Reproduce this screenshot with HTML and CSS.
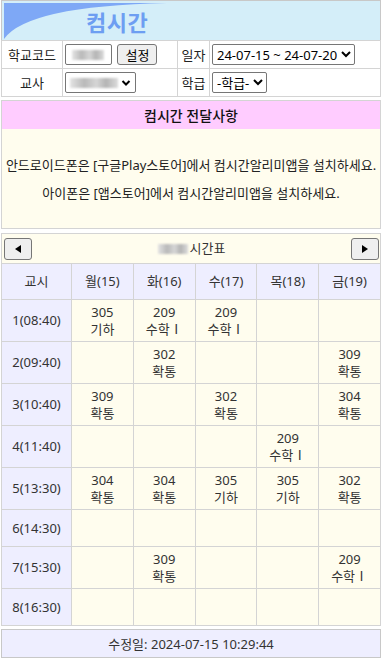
FILE: index.html
```html
<!DOCTYPE html>
<html lang="ko">
<head>
<meta charset="utf-8">
<title>컴시간</title>
<link rel="stylesheet" href="styles.css">
</head>
<body>
<div class="page">
  <div class="header">
    <svg class="swoosh" width="170" height="40" viewBox="0 0 170 40" aria-hidden="true">
      <path d="M2,2 L165,2 Q25,5 2,38 Z" fill="#7ea8f6"/>
    </svg>
    <h1 class="title">컴시간</h1>
  </div>

  <table class="form">
    <tr>
      <th class="lbl">학교코드</th>
      <td class="inp">
        <span class="fake-input"><span class="blur b1"></span></span>
        <button class="btn set">설정</button>
      </td>
      <th class="lbl2">일자</th>
      <td class="val">
        <select class="sel"><option>24-07-15 ~ 24-07-20</option></select>
      </td>
    </tr>
    <tr>
      <th class="lbl">교사</th>
      <td class="inp">
        <span class="fake-select"><span class="blur b2"></span><svg class="chev" width="10" height="8" viewBox="0 0 10 8"><path d="M1.5,2 L5,5.5 L8.5,2" fill="none" stroke="#000" stroke-width="2"/></svg></span>
      </td>
      <th class="lbl2">학급</th>
      <td class="val">
        <select class="sel"><option>-학급-</option></select>
      </td>
    </tr>
  </table>

  <div class="notice">
    <div class="notice-title">컴시간 전달사항</div>
    <div class="notice-body">
      <p>안드로이드폰은 [구글Play스토어]에서 컴시간알리미앱을 설치하세요.</p>
      <p>아이폰은 [앱스토어]에서 컴시간알리미앱을 설치하세요.</p>
    </div>
  </div>

  <table class="tt">
    <colgroup>
      <col class="c0"><col><col><col><col><col>
    </colgroup>
    <tr class="cap">
      <td colspan="6">
        <div class="cap-row">
          <button class="btn nav"><svg width="10" height="10" viewBox="0 0 10 10"><path d="M8,1 L2,5 L8,9 Z" fill="#000"/></svg></button>
          <span class="cap-title"><span class="blur b3"></span>시간표</span>
          <button class="btn nav"><svg width="10" height="10" viewBox="0 0 10 10"><path d="M2,1 L8,5 L2,9 Z" fill="#000"/></svg></button>
        </div>
      </td>
    </tr>
    <tr class="head">
      <th>교시</th><th>월(15)</th><th>화(16)</th><th>수(17)</th><th>목(18)</th><th>금(19)</th>
    </tr>
    <tr>
      <th>1(08:40)</th><td>305<br>기하</td><td>209<br>수학Ⅰ</td><td>209<br>수학Ⅰ</td><td></td><td></td>
    </tr>
    <tr>
      <th>2(09:40)</th><td></td><td>302<br>확통</td><td></td><td></td><td>309<br>확통</td>
    </tr>
    <tr>
      <th>3(10:40)</th><td>309<br>확통</td><td></td><td>302<br>확통</td><td></td><td>304<br>확통</td>
    </tr>
    <tr>
      <th>4(11:40)</th><td></td><td></td><td></td><td>209<br>수학Ⅰ</td><td></td>
    </tr>
    <tr>
      <th>5(13:30)</th><td>304<br>확통</td><td>304<br>확통</td><td>305<br>기하</td><td>305<br>기하</td><td>302<br>확통</td>
    </tr>
    <tr class="empty">
      <th>6(14:30)</th><td></td><td></td><td></td><td></td><td></td>
    </tr>
    <tr>
      <th>7(15:30)</th><td></td><td>309<br>확통</td><td></td><td></td><td>209<br>수학Ⅰ</td>
    </tr>
    <tr class="empty">
      <th>8(16:30)</th><td></td><td></td><td></td><td></td><td></td>
    </tr>
  </table>

  <div class="footer">수정일: 2024-07-15 10:29:44</div>
</div>
</body>
</html>
```

FILE: styles.css
```css
* { box-sizing: border-box; }
html, body { margin: 0; padding: 0; background: #fff; }
body {
  font-family: "Noto Sans", "Noto Sans CJK KR", "Liberation Sans", sans-serif;
  font-size: 13px;
  color: #222;
}
.page { width: 382px; padding: 0 1px; }

.header {
  position: relative;
  height: 40px;
  background: #d4eef9;
  border: 1px solid #c8c8c8;
  border-bottom: none;
  display: flex;
  align-items: center;
  padding-left: 84px;
}
.swoosh { position: absolute; left: 0; top: 0; }
.title {
  position: relative;
  margin: 0;
  font-family: "Noto Sans CJK KR", sans-serif;
  font-size: 22px;
  font-weight: bold;
  color: #6d9ef2;
  letter-spacing: 0.5px;
}

.form {
  width: 380px;
  border-collapse: collapse;
  table-layout: fixed;
}
.form th, .form td {
  border: 1px solid #d4d4d4;
  height: 28px;
  padding: 0 2px;
  font-weight: normal;
  font-size: 13px;
  color: #222;
}
.form .lbl { width: 61px; text-align: center; }
.form .inp { width: 115px; }
.form .lbl2 { width: 32px; text-align: center; padding: 0; }
.form .val { padding-left: 2px; }
.fake-input {
  display: inline-flex;
  align-items: center;
  vertical-align: middle;
  width: 47px;
  height: 21px;
  border: 1px solid #767676;
  border-radius: 2px;
  padding-left: 6px;
}
.fake-select {
  display: inline-flex;
  align-items: center;
  justify-content: space-between;
  vertical-align: middle;
  width: 71px;
  height: 21px;
  border: 1px solid #767676;
  border-radius: 2px;
  padding: 0 4px;
}
.blur {
  display: inline-block;
  height: 10px;
  background: linear-gradient(90deg, #e4e4e4, #b9b9b9 30%, #d6d6d6 55%, #b4b4b4 75%, #dcdcdc);
  filter: blur(1.2px);
}
.b1 { width: 32px; }
.b2 { width: 48px; }
.b3 { width: 30px; margin-right: 2px; }
.btn {
  font-family: inherit;
  background: #efefef;
  border: 1px solid #767676;
  border-radius: 3px;
  color: #000;
  padding: 0;
  cursor: pointer;
}
.set {
  width: 40px;
  height: 21px;
  font-size: 13px;
  vertical-align: middle;
  margin-left: 2px;
}
.sel {
  font-family: inherit;
  font-size: 13px;
  height: 21px;
  border: 1px solid #767676;
  border-radius: 2px;
  background: #fff;
  color: #000;
  vertical-align: middle;
}

.notice {
  margin-top: 3px;
  border: 1px solid #d4d4d4;
  background: #fffdee;
}
.notice-title {
  background: #ffccff;
  height: 28px;
  display: flex;
  align-items: center;
  justify-content: center;
  font-size: 14px;
  font-weight: 500;
  color: #111;
}
.notice-body {
  height: 99px;
  padding-top: 28px;
  text-align: center;
  font-size: 13px;
  letter-spacing: 0;
}
.notice-body p { margin: 0 0 11px; line-height: 17px; }

.tt {
  margin-top: 4px;
  width: 380px;
  border-collapse: collapse;
  table-layout: fixed;
  background: #fffdee;
}
.tt .c0 { width: 70px; }
.tt th, .tt td {
  border: 1px solid #d4d4d4;
  text-align: center;
  font-weight: normal;
  font-size: 13px;
  line-height: 17px;
  padding: 3px 0;
  height: 42px;
  color: #333;
}
.tt th { background: #eeeeff; }
.tt tr.empty th, .tt tr.empty td { height: 37px; }
.tt .cap td {
  height: 30px;
  padding: 0;
  background: #fffdee;
}
.cap-row {
  display: flex;
  align-items: center;
  justify-content: space-between;
  padding: 0 1px 0 2px;
}
.nav {
  width: 28px;
  height: 22px;
  display: flex;
  align-items: center;
  justify-content: center;
}
.cap-title {
  display: inline-flex;
  align-items: center;
  font-size: 13px;
  color: #333;
}
.tt .head th { height: 36px; }

.footer {
  margin-top: 3px;
  height: 29px;
  border: 1px solid #c8c8c8;
  background: #eeeeff;
  display: flex;
  align-items: center;
  justify-content: center;
  font-size: 13px;
  color: #333;
}
```
